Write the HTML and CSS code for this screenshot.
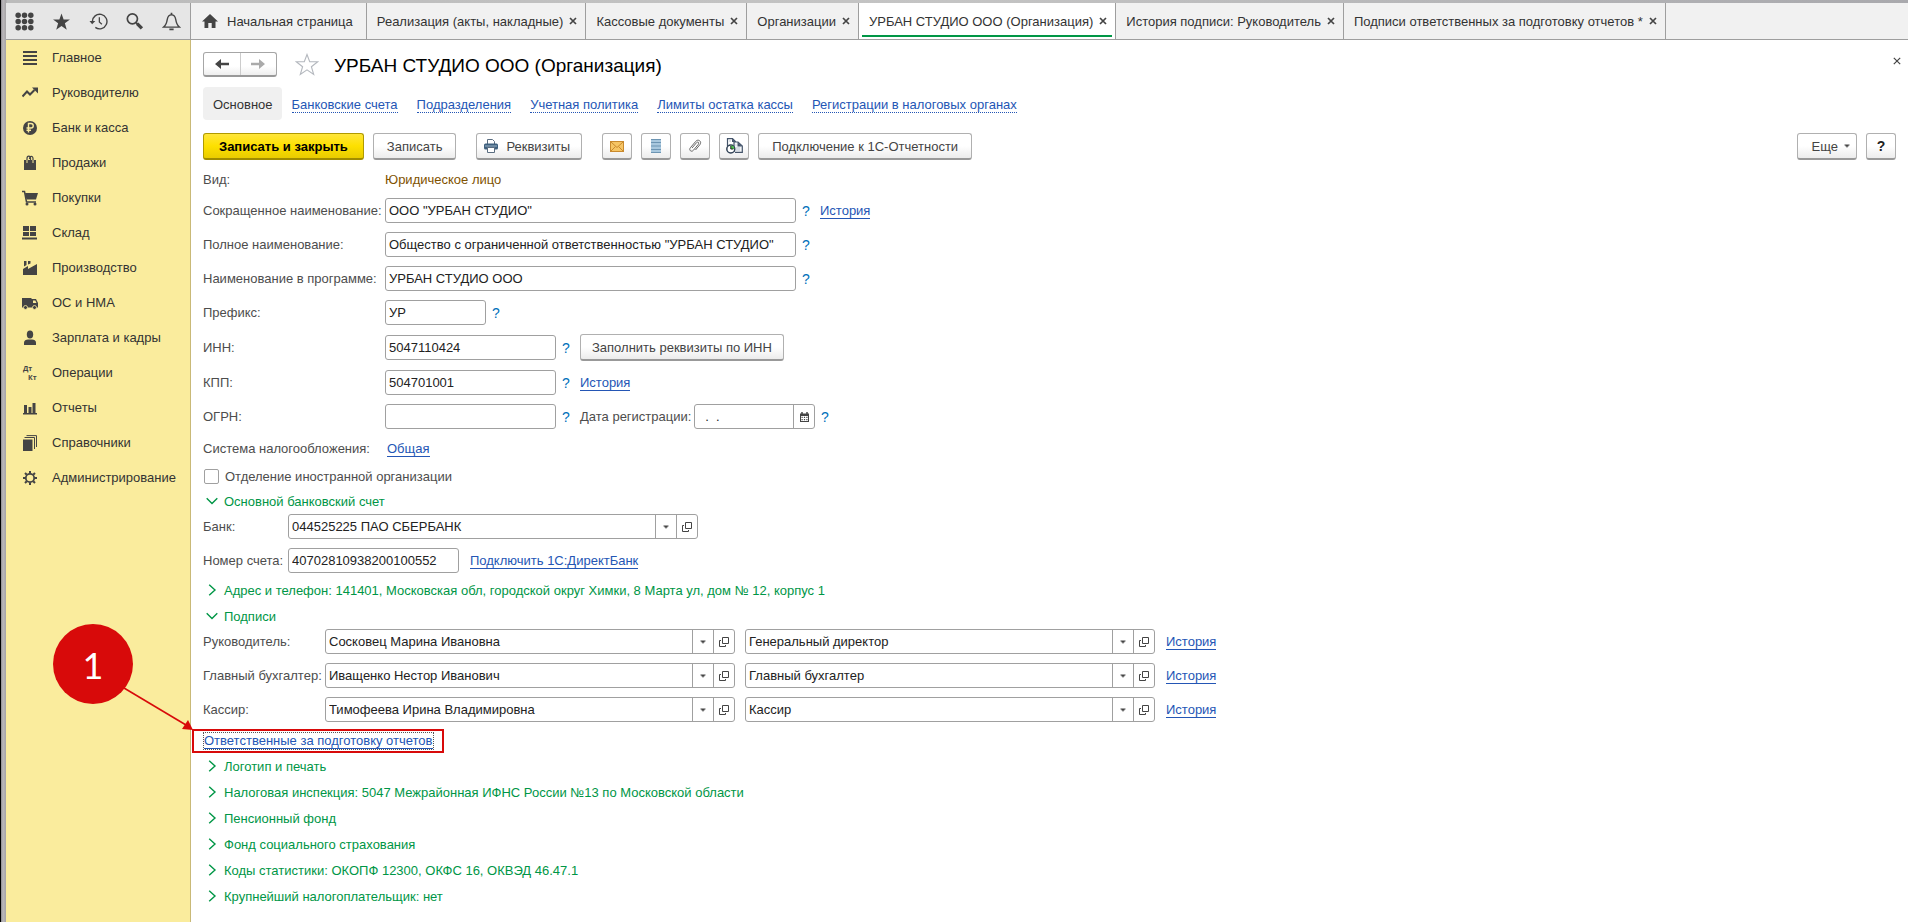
FILE: index.html
```html
<!DOCTYPE html>
<html lang="ru">
<head>
<meta charset="utf-8">
<title>УРБАН СТУДИО ООО (Организация)</title>
<link rel="stylesheet" href="styles.css">
</head>
<body>
<svg class="defs" aria-hidden="true">
  <symbol id="i-drop" viewBox="0 0 8 4"><path d="M1.500.5h5v1h-1v1h-1v1h-1v-1h-1v-1h-1z" fill="#444"/></symbol>
  <symbol id="i-open" viewBox="0 0 10 10"><path d="M3.500.5h6v6h-6zM2 3.500H.5v6h6V8" fill="none" stroke="#444"/></symbol>
  <symbol id="i-down" viewBox="0 0 12 12"><path d="M.7 3.200 6 8.500l5.300-5.300" fill="none" stroke="#009646" stroke-width="1.400"/></symbol>
  <symbol id="i-right" viewBox="0 0 12 12"><path d="M3.200.7 9 6l-5.800 5.300" fill="none" stroke="#009646" stroke-width="1.400"/></symbol>
  <symbol id="i-x" viewBox="0 0 8 8"><path d="M1 1l6 6M7 1L1 7" fill="none" stroke="#444" stroke-width="1.700"/></symbol>
</svg>
<div class="app">
  <header class="topbar">
    <div class="tools">
      <button class="tool" aria-label="Меню"><svg width="18" height="18" viewBox="0 0 18 18" fill="#444"><circle cx="3" cy="3" r="2.600"/><circle cx="9" cy="3" r="2.600"/><circle cx="15" cy="3" r="2.600"/><circle cx="3" cy="9" r="2.600"/><circle cx="9" cy="9" r="2.600"/><circle cx="15" cy="9" r="2.600"/><circle cx="3" cy="15" r="2.600"/><circle cx="9" cy="15" r="2.600"/><circle cx="15" cy="15" r="2.600"/></svg></button>
      <button class="tool" aria-label="Избранное"><svg width="18" height="18" viewBox="0 0 18 18"><path d="M9 1.500l2 5.500h6l-4.800 3.700 1.800 6L9 13.200l-5 3.500 1.800-6L1 7h6z" fill="#444"/></svg></button>
      <button class="tool" aria-label="История"><svg width="18" height="18" viewBox="0 0 18 18"><path d="M3.200 9A6.900 6.900 0 1 1 6 14.600" fill="none" stroke="#444" stroke-width="1.300"/><path d="M.5 8.500h5.500L3 11.500z" fill="#444"/><path d="M9.800 5v4.500l2.400 2" fill="none" stroke="#444" stroke-width="1.200"/></svg></button>
      <button class="tool" aria-label="Поиск"><svg width="18" height="18" viewBox="0 0 18 18" fill="none" stroke="#444"><circle cx="7" cy="6.500" r="4.800" stroke-width="1.600"/><path d="M10.500 10l1.500 1.500" stroke-width="1.600"/><path d="M11.500 11l4.500 4.500" stroke-width="3.200"/></svg></button>
      <button class="tool" aria-label="Уведомления"><svg width="18" height="18" viewBox="0 0 18 18" fill="none" stroke="#444" stroke-width="1.300"><path d="M1.500 14.300c2.500-2 3-4 3.500-7.300.4-2.700 1.700-4.300 4-4.300S12.600 4.300 13 7c.5 3.300 1 5.300 3.500 7.300z"/><path d="M9 .8v2M7 16.500h4" stroke-width="1.600"/></svg></button>
    </div>
    <nav class="tabs">
      <button class="tab tab-home"><svg width="16" height="14" viewBox="0 0 16 14"><path d="M8 0l8 7.500h-2.500V14H9.700V9H6.300v5H2.500V7.500H0z" fill="#444"/></svg>Начальная страница</button>
      <button class="tab">Реализация (акты, накладные)<svg width="8" height="8"><use href="#i-x"/></svg></button>
      <button class="tab">Кассовые документы<svg width="8" height="8"><use href="#i-x"/></svg></button>
      <button class="tab">Организации<svg width="8" height="8"><use href="#i-x"/></svg></button>
      <button class="tab tab-active">УРБАН СТУДИО ООО (Организация)<svg width="8" height="8"><use href="#i-x"/></svg></button>
      <button class="tab">История подписи: Руководитель<svg width="8" height="8"><use href="#i-x"/></svg></button>
      <button class="tab">Подписи ответственных за подготовку отчетов *<svg width="8" height="8"><use href="#i-x"/></svg></button>
    </nav>
  </header>
  <div class="body">
    <aside class="sidebar">
      <a class="side" href="#"><svg viewBox="0 0 16 16"><path d="M1 1h14v2H1zM1 5h14v2H1zM1 9h14v2H1zM1 13h14v2H1z"/></svg>Главное</a>
      <a class="side" href="#"><svg viewBox="0 0 16 16"><path d="M.5 11.500L5 6.500l3 3L12.500 5" fill="none" stroke="#444" stroke-width="2"/><path d="M10 2.500h6v6z"/></svg>Руководителю</a>
      <a class="side" href="#"><svg viewBox="0 0 16 16"><circle cx="8" cy="8" r="7"/><path d="M6.500 12.500v-9H9a2.200 2.200 0 0 1 0 4.500H4.500M4.500 10.300H9" fill="none" stroke="#faec9d" stroke-width="1.400"/></svg>Банк и касса</a>
      <a class="side" href="#"><svg viewBox="0 0 16 16"><path d="M2 5h12v10H2z"/><path d="M5 8V3.500C5 .3 8.500.3 8.500 3.500V5M7.500 4C7.500.5 11 .5 11 3.500V8" fill="none" stroke="#444" stroke-width="1.200"/><path d="M5 5v3M11 5v3" stroke="#faec9d"/></svg>Продажи</a>
      <a class="side" href="#"><svg viewBox="0 0 16 16"><path d="M0 1.500h2.500L4.500 12H14" fill="none" stroke="#444" stroke-width="1.500"/><path d="M3 3h13l-2 6.500H4.500z"/><circle cx="5" cy="14" r="1.500"/><circle cx="13" cy="14" r="1.500"/></svg>Покупки</a>
      <a class="side" href="#"><svg viewBox="0 0 16 16"><path d="M1 1h6v5H1zM8 1h6v5H8zM1 7h6v4H1zM8 7h6v4H8zM0 12.500h15v2H0z"/></svg>Склад</a>
      <a class="side" href="#"><svg viewBox="0 0 16 16"><path d="M1 15V9l5-3v3l9-5v11zM2 1h2.500v4L2 6.500zM6 1h2.500v2.500L6 4.500z"/></svg>Производство</a>
      <a class="side" href="#"><svg viewBox="0 0 16 16"><path d="M0 3h9.500v9.500H0zM9.500 4H14l2 4v4.500H9.500z"/><path d="M11 5.500h2.300l1.200 2.500H11z" fill="#faec9d"/><g stroke="#faec9d" stroke-width=".8"><circle cx="3.500" cy="12.500" r="2"/><circle cx="12.500" cy="12.500" r="2"/></g></svg>ОС и НМА</a>
      <a class="side" href="#"><svg viewBox="0 0 16 16"><ellipse cx="8" cy="4.500" rx="3.200" ry="4"/><path d="M2 15v-2.500C2 10.500 4 9.500 6 9.500h4c2 0 4 1 4 3V15z"/></svg>Зарплата и кадры</a>
      <a class="side" href="#"><svg viewBox="0 0 16 16"><text x="1" y="6" class="dtkt">Дт</text><text x="6" y="15" class="dtkt">Кт</text></svg>Операции</a>
      <a class="side" href="#"><svg viewBox="0 0 16 16"><path d="M1 13h14v1.500H1zM2 5h3v8H2zM6.500 7h3v6h-3zM10.500 3h3v10h-3z"/></svg>Отчеты</a>
      <a class="side" href="#"><svg viewBox="0 0 16 16"><path d="M1 4.500h9.500V16H1z"/><path d="M2.500 2.500h10V14M4.500.6h10V12" fill="none" stroke="#444"/></svg>Справочники</a>
      <a class="side" href="#"><svg class="gear" viewBox="0 0 16 16"><circle cx="8" cy="8" r="4.200" stroke-width="1.800"/><path d="M8 1v2.500M8 12.500V15M1 8h2.500M12.500 8H15M3 3l1.800 1.800M11.200 11.200 13 13M13 3l-1.800 1.800M4.800 11.200 3 13" stroke-width="2"/></svg>Администрирование</a>
    </aside>
    <main class="main">
      <div class="title-row">
        <div class="nav-group">
          <button aria-label="Назад"><svg width="14" height="10" viewBox="0 0 14 10"><path d="M0 5l6-5v3.700h8v2.600H6V10z" fill="#444"/></svg></button>
          <button aria-label="Вперед"><svg width="14" height="10" viewBox="0 0 14 10"><path d="M14 5L8 0v3.700H0v2.600h8V10z" fill="#aaa"/></svg></button>
        </div>
        <button class="bare" aria-label="В избранное"><svg width="24" height="23" viewBox="0 0 24 23"><path d="M12 1.500l2.700 7.300h8l-6.300 4.900 2.300 7.800-6.700-4.700-6.700 4.700 2.300-7.800-6.300-4.900h8z" fill="none" stroke="#b4b8be" stroke-width="1.100"/></svg></button>
        <h1>УРБАН СТУДИО ООО (Организация)</h1>
        <button class="bare close" aria-label="Закрыть"><svg width="8" height="8" viewBox="0 0 8 8"><path d="M.8.800l6.400 6.400M7.200.800L.8 7.200" stroke="#444" stroke-width="1.200"/></svg></button>
      </div>
      <nav class="sections">
        <span class="chip">Основное</span>
        <a href="#">Банковские счета</a>
        <a href="#">Подразделения</a>
        <a href="#">Учетная политика</a>
        <a href="#">Лимиты остатка кассы</a>
        <a href="#">Регистрации в налоговых органах</a>
      </nav>
      <div class="commands">
        <button class="btn btn-main">Записать и закрыть</button>
        <button class="btn">Записать</button>
        <button class="btn btn-print"><svg width="14" height="14" viewBox="0 0 14 14"><path d="M3.500 5V.5h5l2 2V5" fill="#fff" stroke="#5a6d80"/><rect y="4.500" width="14" height="6" rx="1.500" fill="#3f617f"/><path d="M1 7h12" stroke="#9db4c7"/><path d="M3.500 8.500h7v5h-7z" fill="#fff" stroke="#5a6d80"/></svg>Реквизиты</button>
        <button class="btn btn-icon group" aria-label="Письмо"><svg width="14" height="11" viewBox="0 0 14 11"><rect x=".5" y=".5" width="13" height="10" fill="#f6c564" stroke="#c98a2e"/><path d="M1 1l6 5.500L13 1M1 10l4.500-4.500M13 10L8.500 5.500" fill="none" stroke="#c98a2e"/></svg></button>
        <button class="btn btn-icon" aria-label="Список"><svg width="10" height="14" viewBox="0 0 10 14"><path d="M0 0h10v14H0z" fill="#a9c8de"/><path d="M0 .5h10M0 3.500h10M0 7h10M0 10.500h10M0 13.500h10" stroke="#6d95b3"/></svg></button>
        <button class="btn btn-icon" aria-label="Файлы"><svg width="14" height="14" viewBox="0 0 14 14"><path d="M4 9l4.700-5.500c1.400-1.300 2.800.3 1.700 1.700L5.500 11.200C3.500 13.600.5 11.200 2.300 8.800L7.800 2.300C10.200-.5 14.200 2.500 12 5.500L7.500 11" fill="none" stroke="#666"/></svg></button>
        <button class="btn btn-icon" aria-label="История"><svg width="17" height="16" viewBox="0 0 17 16"><path d="M1.500 8V.6h5l3 3V8" fill="#fff" stroke="#44546a" stroke-width="1.200"/><path d="M6 .5v3.500h3.500z" fill="#44546a"/><path d="M8 14V4h4l4.300 4v6.400H9" fill="#f4f6f8" stroke="#44546a" stroke-width="1.200"/><path d="M11.500 4v4.500H16z" fill="#44546a"/><path d="M9.500 7h1M10 10h4M10 12h4M3 3h2" stroke="#b9c3cf"/><circle cx="4.800" cy="11" r="4" fill="#fff" stroke="#2f4054" stroke-width="1.500"/><path d="M4.800 11V7.500A3.500 3.500 0 0 1 8.300 11z" fill="#4cc04c"/><path d="M4.800 8v3h2.500" fill="none" stroke="#222"/></svg></button>
        <button class="btn">Подключение к 1С-Отчетности</button>
        <button class="btn btn-more">Еще<svg width="8" height="4"><use href="#i-drop"/></svg></button>
        <button class="btn btn-icon btn-help">?</button>
      </div>

      <form class="form">
        <div class="row row-text"><span class="label wide">Вид:</span><span class="kind">Юридическое лицо</span></div>
        <div class="row"><label class="label wide" for="short">Сокращенное наименование:</label><input class="field w-long" id="short" value='ООО "УРБАН СТУДИО"'><button type="button" class="q">?</button><a class="link" href="#">История</a></div>
        <div class="row"><label class="label wide" for="full">Полное наименование:</label><input class="field w-long" id="full" value='Общество с ограниченной ответственностью "УРБАН СТУДИО"'><button type="button" class="q">?</button></div>
        <div class="row"><label class="label wide" for="name">Наименование в программе:</label><input class="field w-long" id="name" value="УРБАН СТУДИО ООО"><button type="button" class="q">?</button></div>
        <div class="row"><label class="label wide" for="prefix">Префикс:</label><input class="field w-short" id="prefix" value="УР"><button type="button" class="q">?</button></div>
        <div class="row"><label class="label wide" for="inn">ИНН:</label><input class="field w-mid" id="inn" value="5047110424"><button type="button" class="q">?</button><button type="button" class="btn btn-fill">Заполнить реквизиты по ИНН</button></div>
        <div class="row"><label class="label wide" for="kpp">КПП:</label><input class="field w-mid" id="kpp" value="504701001"><button type="button" class="q">?</button><a class="link" href="#">История</a></div>
        <div class="row"><label class="label wide" for="ogrn">ОГРН:</label><input class="field w-mid" id="ogrn"><button type="button" class="q">?</button><label class="label date-label" for="date">Дата регистрации:</label><div class="combo w-date"><input id="date" value="  .  ."><button type="button" aria-label="Календарь"><svg width="9" height="10" viewBox="0 0 9 10"><path d="M0 1.500h9V10H0z" fill="#444"/><path d="M2 0v2.500M7 0v2.500" stroke="#444" stroke-width="1.500"/><path d="M1 4h7v5H1z" fill="#fff"/><path d="M1.500 5.300h6M1.500 7.600h6" stroke="#444" stroke-width="1.200" stroke-dasharray="1.200"/></svg></button></div><button type="button" class="q">?</button></div>
        <div class="row row-text"><span class="label wide">Система налогообложения:</span><a class="link tax" href="#">Общая</a></div>
        <div class="row row-check"><input type="checkbox" id="foreign"><label class="label" for="foreign">Отделение иностранной организации</label></div>

        <button type="button" class="group-head after"><svg><use href="#i-down"/></svg>Основной банковский счет</button>
        <div class="row first"><label class="label bank" for="bank">Банк:</label><div class="combo"><input id="bank" value="044525225 ПАО СБЕРБАНК"><button type="button" aria-label="Выбрать"><svg width="8" height="4"><use href="#i-drop"/></svg></button><button type="button" aria-label="Открыть"><svg width="10" height="10"><use href="#i-open"/></svg></button></div></div>
        <div class="row"><label class="label bank" for="acc">Номер счета:</label><input class="field w-mid" id="acc" value="40702810938200100552"><a class="link direct" href="#">Подключить 1С:ДиректБанк</a></div>

        <button type="button" class="group-head after"><svg><use href="#i-right"/></svg>Адрес и телефон: 141401, Московская обл, городской округ Химки, 8 Марта ул, дом № 12, корпус 1</button>
        <button type="button" class="group-head"><svg><use href="#i-down"/></svg>Подписи</button>
        <div class="row first"><label class="label sign" for="s1">Руководитель:</label><div class="combo"><input id="s1" value="Сосковец Марина Ивановна"><button type="button" aria-label="Выбрать"><svg width="8" height="4"><use href="#i-drop"/></svg></button><button type="button" aria-label="Открыть"><svg width="10" height="10"><use href="#i-open"/></svg></button></div><div class="combo next"><input aria-label="Должность руководителя" value="Генеральный директор"><button type="button" aria-label="Выбрать"><svg width="8" height="4"><use href="#i-drop"/></svg></button><button type="button" aria-label="Открыть"><svg width="10" height="10"><use href="#i-open"/></svg></button></div><a class="link direct" href="#">История</a></div>
        <div class="row"><label class="label sign" for="s2">Главный бухгалтер:</label><div class="combo"><input id="s2" value="Иващенко Нестор Иванович"><button type="button" aria-label="Выбрать"><svg width="8" height="4"><use href="#i-drop"/></svg></button><button type="button" aria-label="Открыть"><svg width="10" height="10"><use href="#i-open"/></svg></button></div><div class="combo next"><input aria-label="Должность бухгалтера" value="Главный бухгалтер"><button type="button" aria-label="Выбрать"><svg width="8" height="4"><use href="#i-drop"/></svg></button><button type="button" aria-label="Открыть"><svg width="10" height="10"><use href="#i-open"/></svg></button></div><a class="link direct" href="#">История</a></div>
        <div class="row"><label class="label sign" for="s3">Кассир:</label><div class="combo"><input id="s3" value="Тимофеева Ирина Владимировна"><button type="button" aria-label="Выбрать"><svg width="8" height="4"><use href="#i-drop"/></svg></button><button type="button" aria-label="Открыть"><svg width="10" height="10"><use href="#i-open"/></svg></button></div><div class="combo next"><input aria-label="Должность кассира" value="Кассир"><button type="button" aria-label="Выбрать"><svg width="8" height="4"><use href="#i-drop"/></svg></button><button type="button" aria-label="Открыть"><svg width="10" height="10"><use href="#i-open"/></svg></button></div><a class="link direct" href="#">История</a></div>
        <div class="reports">
          <a class="link focused" href="#">Ответственные за подготовку отчетов</a>
          <span class="frame"></span>
          <svg class="arrow" width="72" height="46" viewBox="0 0 72 46"><path d="M1 1l62 37" stroke="#d80a0a" stroke-width="1.600"/><path d="M70 43l-11-1 6-9z" fill="#d80a0a"/></svg>
          <span class="step">1</span>
        </div>
        <button type="button" class="group-head"><svg><use href="#i-right"/></svg>Логотип и печать</button>
        <button type="button" class="group-head"><svg><use href="#i-right"/></svg>Налоговая инспекция: 5047 Межрайонная ИФНС России №13 по Московской области</button>
        <button type="button" class="group-head"><svg><use href="#i-right"/></svg>Пенсионный фонд</button>
        <button type="button" class="group-head"><svg><use href="#i-right"/></svg>Фонд социального страхования</button>
        <button type="button" class="group-head"><svg><use href="#i-right"/></svg>Коды статистики: ОКОПФ 12300, ОКФС 16, ОКВЭД 46.47.1</button>
        <button type="button" class="group-head"><svg><use href="#i-right"/></svg>Крупнейший налогоплательщик: нет</button>
      </form>
    </main>
  </div>
</div>
</body>
</html>
```
FILE: styles.css
```css
* { box-sizing: border-box; }
body { margin: 0; background: #fff; }
body, button, input { font-family: "Liberation Sans", Arial, sans-serif; font-size: 13px; color: #333; }
button { margin: 0; padding: 0; border: 0; background: none; white-space: nowrap; }
svg { flex: none; display: block; }
.defs { display: none; }

.app {
  min-height: 100vh;
  padding: 3px 0 0 6px;
  display: flex;
  flex-direction: column;
  background: linear-gradient(90deg, #000 1px, #8e8c90 1px, #bcb9bc 3px, #a5a3a5 6px, #bbb 7px, #c4c4c4 50%, #a9a9ad);
}

.topbar { display: flex; height: 37px; background: #f1f1f1; border-bottom: 1px solid #9e9e9e; }
.tools { width: 185px; padding: 0 9px; display: flex; align-items: center; justify-content: space-between; background: #e6e6e6; border-right: 1px solid #9e9e9e; }
.tool svg { width: 19px; height: 19px; }
.tabs { display: flex; }
.tab { display: flex; align-items: center; gap: 6px; padding: 0 8px 0 10px; border-right: 1px solid #9e9e9e; color: #333; }
.tab-home { gap: 9px; padding: 0 13px 0 11px; }
.tab-active { background: linear-gradient(#009646, #009646) 3px 32px / calc(100% - 6px) 2px no-repeat #fff; }

.body { flex: 1; display: flex; }
.sidebar { width: 185px; background: #faec9d; border-right: 1px solid #c9b977; }
.side { display: flex; align-items: center; gap: 14px; height: 35px; padding-left: 16px; color: #333; text-decoration: none; }
.side svg { width: 16px; height: 16px; fill: #444; }
.side .gear { fill: none; stroke: #444; }
.dtkt { font: bold 7px "Open Sans", sans-serif; }

.main { flex: 1; padding: 12px 12px 0; background: #fff; }
.title-row { display: flex; align-items: center; height: 25px; }
.nav-group { display: flex; width: 74px; height: 25px; border: 1px solid #a6a6a6; border-bottom: 2px solid #999; border-radius: 3px; background: linear-gradient(#fff 60%, #eee); }
.nav-group button { flex: 1; display: grid; place-items: center; }
.nav-group button + button { border-left: 1px solid #ccc; }
.bare { margin-left: 18px; }
h1 { margin: 0 0 0 15px; padding-top: 2px; font-size: 19px; font-weight: normal; color: #000; }
.close { align-self: flex-start; margin: 5px -5px 0 auto; }

.sections { display: flex; align-items: center; gap: 19px; margin-top: 10px; }
.chip { height: 33px; margin-right: -9px; padding: 0 9px 0 10px; line-height: 35px; border-radius: 4px; background: #f0f0f0; color: #333; }
.sections a { padding-top: 3px; line-height: 14px; border-bottom: 1px dotted #2456b5; color: #2456b5; text-decoration: none; }

.btn { height: 27px; padding: 0 13px; border: 1px solid #b0b0b0; border-bottom: 2px solid #999; border-radius: 3px; background: linear-gradient(#fff 50%, #ececec); color: #444; }
.btn-fill { padding: 0 11px; }
.commands { display: flex; gap: 9px; margin-top: 13px; }
.btn-main { padding: 0 15px; border-color: #b09a00; border-bottom-color: #a08c00; background: linear-gradient(#ffe63a, #fde000 50%, #e9cc00); font-weight: bold; color: #000; }
.btn-print { display: flex; align-items: center; gap: 8px; margin-left: 11px; padding: 0 11px 0 7px; }
.btn-icon { display: grid; place-items: center; width: 30px; padding: 0; }
.group { margin-left: 11px; }
.btn-more { display: flex; align-items: center; gap: 5px; margin-left: auto; padding: 0 5px 0 14px; }
.btn-help { font-size: 14px; font-weight: bold; color: #222; }

.form { display: flex; flex-direction: column; align-items: flex-start; padding-top: 9px; }
.row { display: flex; align-items: center; margin-top: 9px; }
.row-text { height: 21px; }
.row-text:first-child { height: 20px; margin-top: 0; }
.first { margin-top: 0; }
.label { color: #4d4d4d; white-space: nowrap; }
.wide { width: 182px; }
.bank { width: 85px; }
.sign { width: 122px; }
.kind { color: #7f5200; }
.field, .combo { height: 25px; border: 1px solid #a0a0a0; border-radius: 3px; background: #fff; }
.field { padding: 0 3px; }
.field, .combo input { outline: 0; color: #222; }
.combo { display: flex; width: 410px; overflow: hidden; }
.combo input { flex: 1; min-width: 0; padding: 0 3px; border: 0; background: none; }
.combo button { display: grid; place-items: center; width: 21px; border-left: 1px solid #a0a0a0; }
.next { margin-left: 10px; }
.w-long { width: 411px; }
.w-mid { width: 171px; }
.w-short { width: 101px; }
.w-date { width: 121px; }
.q { width: 7px; margin: 0 11px 0 6px; font-size: 14px; color: #0070ba; }
.link { padding-top: 1px; line-height: 14px; border-bottom: 1px solid #2456b5; color: #2456b5; text-decoration: none; }
.direct { margin-left: 11px; }
.tax { margin-left: 2px; }
.date-label { width: 114px; }
.row-check { height: 16px; gap: 6px; padding-left: 1px; }
.row-check input { appearance: none; width: 15px; height: 15px; margin: 0; border: 1px solid #a0a0a0; border-radius: 2px; background: #fff; }

.group-head { display: flex; align-items: center; gap: 6px; height: 26px; padding-left: 3px; color: #009646; }
.group-head svg { width: 12px; height: 12px; }
.after { margin-top: 4px; }

.reports { position: relative; display: flex; align-items: center; height: 24px; margin-top: 7px; }
.focused { outline: 1px dotted #555; margin-left: 1px; }
.frame { position: absolute; inset: 0 -11px 0 -11px; border: 2px solid #d80a0a; }
.arrow { position: absolute; left: -80px; top: -42px; }
.step { position: absolute; left: -150px; top: -105px; width: 80px; height: 80px; border-radius: 50%; background: #d80a0a; color: #fff; font: 36px/82px Lato, "Open Sans", sans-serif; text-align: center; }
```
